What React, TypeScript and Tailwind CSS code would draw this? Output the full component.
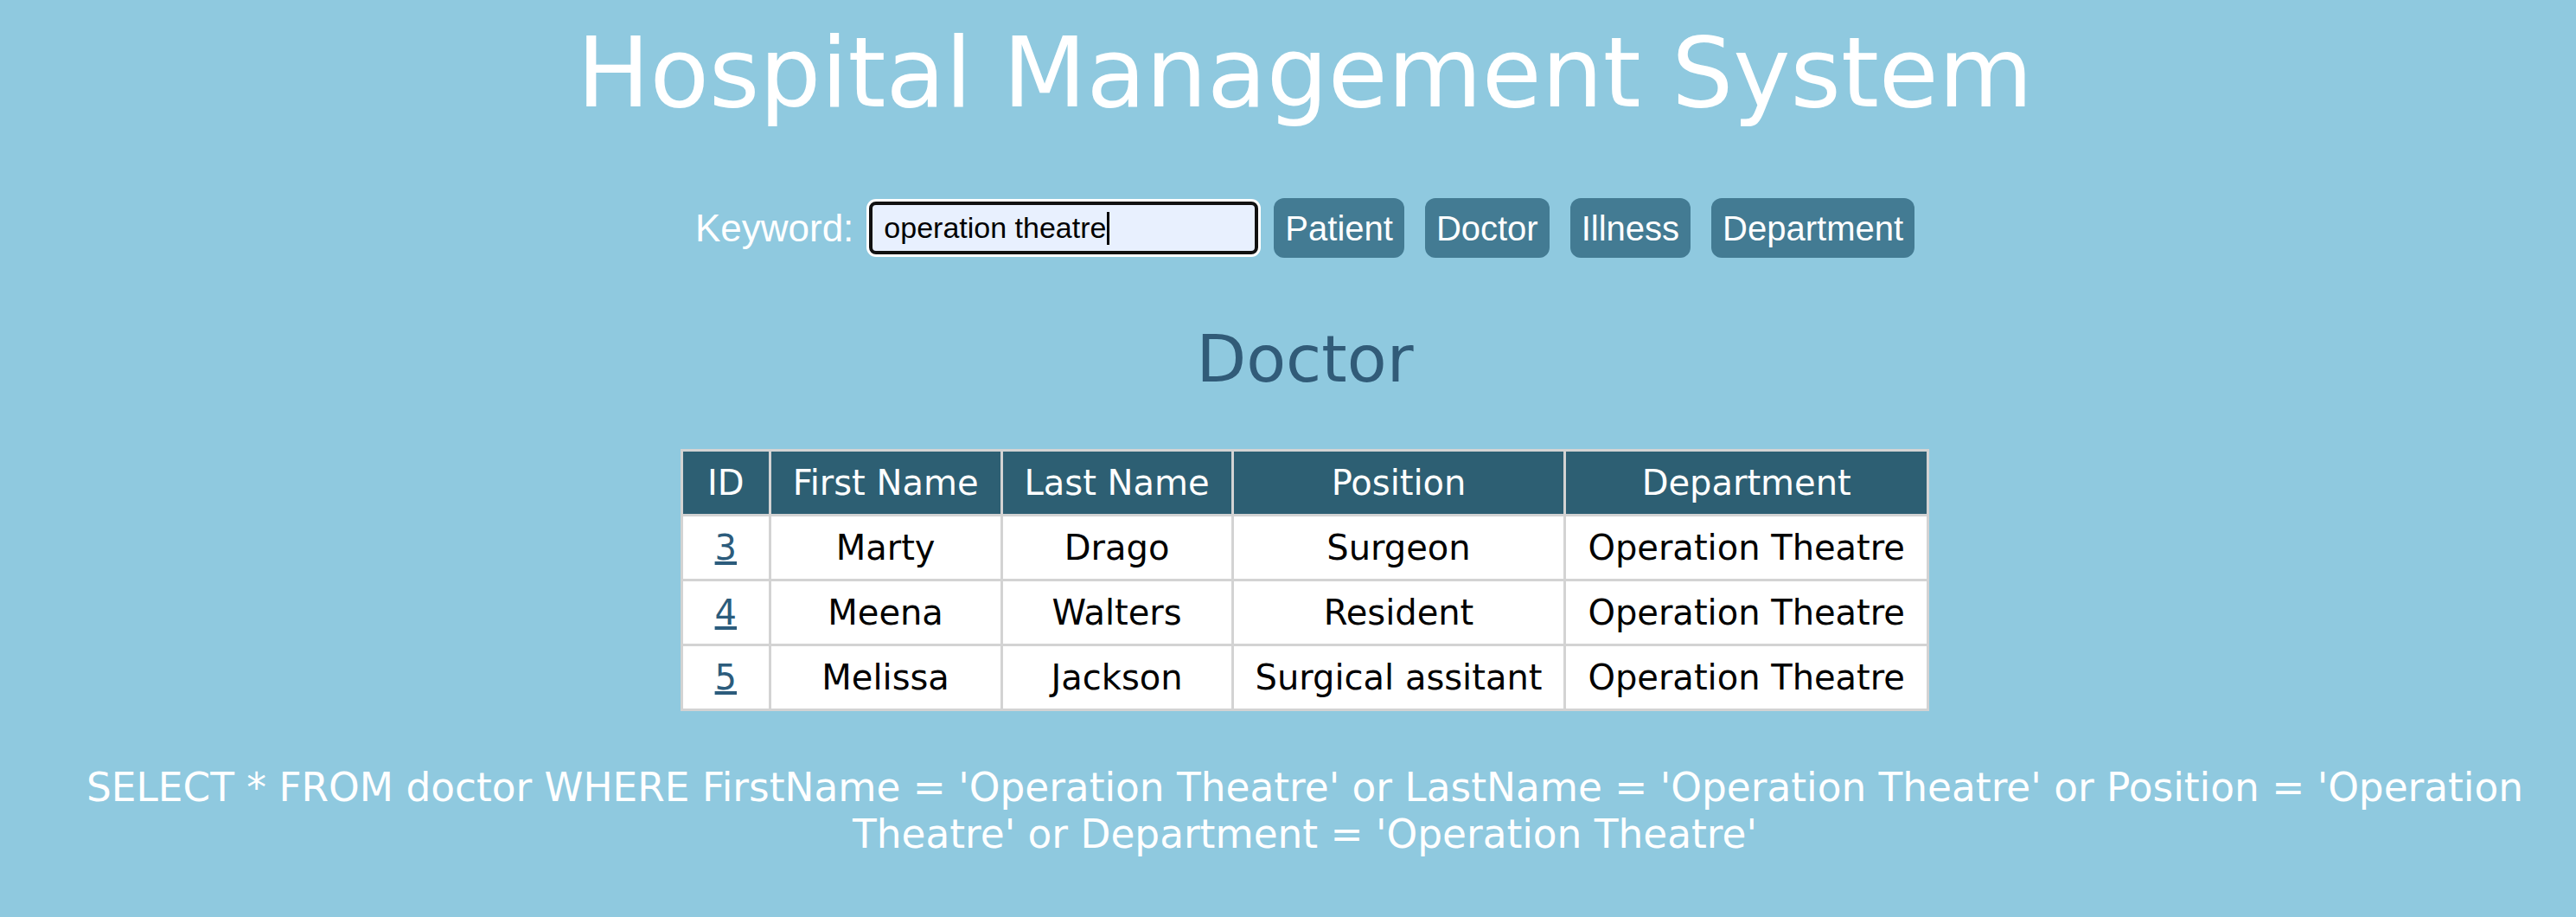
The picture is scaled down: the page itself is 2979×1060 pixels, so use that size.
const doctors = [
    { id: 3, firstName: "Marty", lastName: "Drago", position: "Surgeon", department: "Operation Theatre" },
    { id: 4, firstName: "Meena", lastName: "Walters", position: "Resident", department: "Operation Theatre" },
    { id: 5, firstName: "Melissa", lastName: "Jackson", position: "Surgical assitant", department: "Operation Theatre" },
];

const tabs = ["Patient", "Doctor", "Illness", "Department"];

const App = () => {
    const keyword = "operation theatre";
    const kw = "Operation Theatre";

    return (
        <div className="min-h-[1060px] w-full bg-[#8fc9df] pl-[39px] font-['DejaVu_Sans',sans-serif] text-center">
            <h1 className="pt-[19px] text-[112px] leading-[130px] text-white">Hospital Management System</h1>

            <div className="mt-[80px] flex items-center justify-center font-['Liberation_Sans',Arial,sans-serif]">
                <label className="text-[44px] text-white leading-none">Keyword:</label>
                <div className="ml-[18px] mr-[18px] flex h-[61px] w-[450px] items-center rounded-[8px] border-4 border-[#111] bg-[#e8f0fe] pl-[13px] text-left text-[34px] text-black ring-[3px] ring-white">
                    <span>{keyword}</span>
                    <span className="ml-[1px] inline-block h-[38px] w-[3px] bg-black"></span>
                </div>
                <div className="flex gap-[24px]">
                    {tabs.map((t) => (
                        <button
                            key={t}
                            className="h-[69px] rounded-[12px] bg-[#437b93] px-[13px] text-[40px] leading-none text-white"
                        >
                            {t}
                        </button>
                    ))}
                </div>
            </div>

            <h2 className="mt-[74px] text-[75px] leading-[87px] text-[#315b78]">Doctor</h2>

            <table className="mx-auto mt-[60px] border-collapse border-[3px] border-[#d3d3d3] text-[40px] leading-[46px]">
                <thead>
                    <tr className="bg-[#2d5f73] text-white">
                        <th className="border-[3px] border-[#d3d3d3] px-[28px] py-[13px] font-normal">ID</th>
                        <th className="border-[3px] border-[#d3d3d3] px-[25px] py-[13px] font-normal">First Name</th>
                        <th className="border-[3px] border-[#d3d3d3] px-[25px] py-[13px] font-normal">Last Name</th>
                        <th className="border-[3px] border-[#d3d3d3] px-[25px] py-[13px] font-normal">Position</th>
                        <th className="border-[3px] border-[#d3d3d3] px-[25px] py-[13px] font-normal">Department</th>
                    </tr>
                </thead>
                <tbody className="bg-white text-black">
                    {doctors.map((d) => (
                        <tr key={d.id}>
                            <td className="border-[3px] border-[#d3d3d3] px-[28px] py-[13px]">
                                <a href="#" className="text-[#2c5c7c] underline">{d.id}</a>
                            </td>
                            <td className="border-[3px] border-[#d3d3d3] px-[25px] py-[13px]">{d.firstName}</td>
                            <td className="border-[3px] border-[#d3d3d3] px-[25px] py-[13px]">{d.lastName}</td>
                            <td className="border-[3px] border-[#d3d3d3] px-[25px] py-[13px]">{d.position}</td>
                            <td className="border-[3px] border-[#d3d3d3] px-[25px] py-[13px]">{d.department}</td>
                        </tr>
                    ))}
                </tbody>
            </table>

            <p className="mx-auto mt-[62px] max-w-[2900px] pb-[60px] text-[45.4px] leading-[54px] text-white">
                SELECT * FROM doctor WHERE FirstName = '{kw}' or LastName = '{kw}' or Position = '{kw}' or Department = '{kw}'
            </p>
        </div>
    );
};

export default App;
